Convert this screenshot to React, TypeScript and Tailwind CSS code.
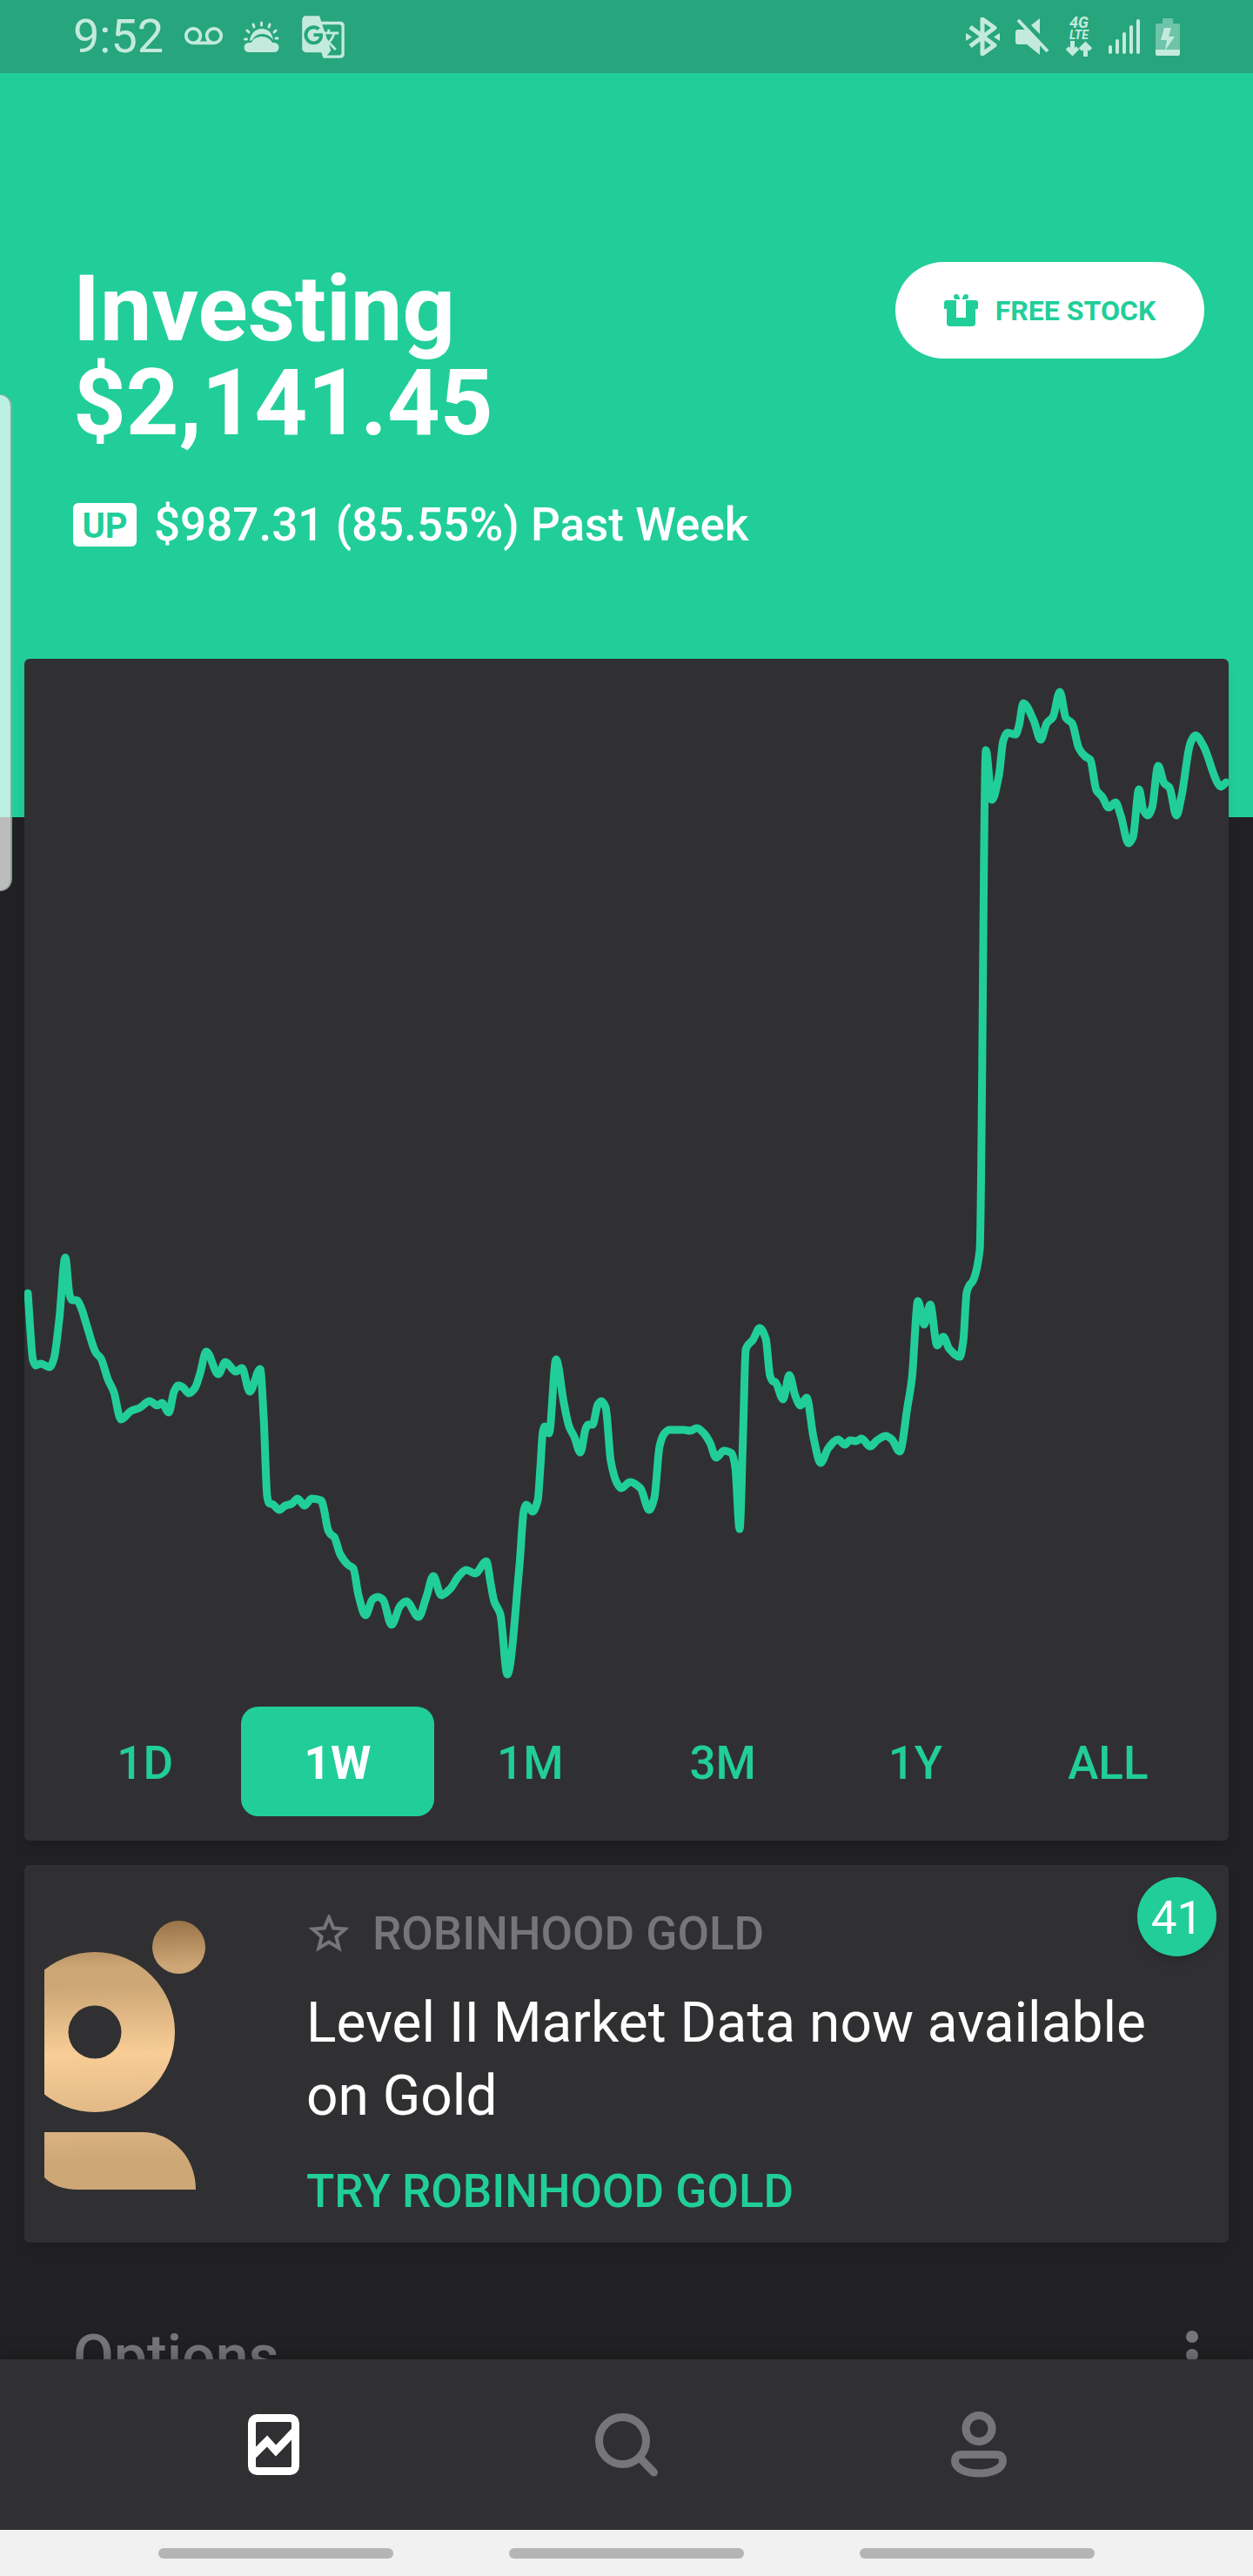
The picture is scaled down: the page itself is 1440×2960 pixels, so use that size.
import React, { useState } from 'react';
import { MdGTranslate, MdVoicemail } from 'react-icons/md';

type Point = [number, number];

const RANGES = ['1D', '1W', '1M', '3M', '1Y', 'ALL'];

const CHART_POINTS: Point[] = [
  [32, 1487], [38, 1564], [41, 1570], [47, 1568], [57, 1572], [62, 1562], [68, 1518], [75, 1446],
  [80, 1489], [83, 1495], [88, 1495], [93, 1503], [100, 1525], [110, 1555], [116, 1562], [124, 1586],
  [131, 1601], [137, 1628], [139, 1632], [151, 1622], [160, 1619], [172, 1611], [181, 1616], [186, 1613],
  [194, 1624], [200, 1600], [205, 1593], [210, 1595], [217, 1602], [224, 1596], [230, 1579], [237, 1554],
  [251, 1580], [259, 1566], [271, 1577], [278, 1573], [287, 1600], [299, 1574], [303, 1629], [307, 1720],
  [309, 1728], [314, 1730], [321, 1736], [328, 1731], [335, 1729], [342, 1723], [350, 1731], [358, 1723],
  [369, 1725], [372, 1734], [377, 1759], [380, 1764], [384, 1767], [391, 1787], [400, 1799], [406, 1803],
  [412, 1834], [420, 1857], [428, 1839], [434, 1836], [440, 1839], [450, 1868], [460, 1846], [467, 1841],
  [481, 1859], [490, 1836], [498, 1812], [507, 1834], [517, 1827], [528, 1811], [536, 1805], [546, 1809],
  [559, 1795], [564, 1821], [568, 1841], [575, 1856], [583, 1925], [597, 1800], [602, 1737], [605, 1730],
  [612, 1738], [618, 1725], [621, 1687], [624, 1645], [626, 1640], [631, 1648], [639, 1563], [648, 1613],
  [654, 1640], [660, 1652], [667, 1670], [673, 1643], [676, 1638], [681, 1638], [687, 1615], [691, 1611],
  [696, 1618], [702, 1680], [709, 1705], [714, 1711], [724, 1704], [736, 1711], [746, 1736], [752, 1722],
  [758, 1663], [763, 1649], [769, 1644], [786, 1644], [793, 1645], [801, 1642], [809, 1648], [816, 1659],
  [823, 1676], [832, 1668], [841, 1671], [845, 1687], [850, 1758], [854, 1647], [857, 1552], [860, 1546],
  [865, 1541], [873, 1527], [880, 1539], [885, 1582], [888, 1588], [891, 1589], [900, 1609], [907, 1581],
  [914, 1605], [920, 1616], [927, 1607], [935, 1653], [943, 1682], [952, 1665], [963, 1655], [971, 1661],
  [977, 1656], [984, 1657], [990, 1654], [1000, 1663], [1008, 1656], [1018, 1651], [1025, 1655], [1034, 1669],
  [1043, 1617], [1048, 1585], [1055, 1496], [1062, 1523], [1069, 1500], [1077, 1547], [1084, 1537], [1091, 1551],
  [1103, 1560], [1107, 1542], [1111, 1486], [1114, 1478], [1118, 1473], [1126, 1437], [1133, 863], [1140, 920],
  [1148, 892], [1153, 852], [1158, 843], [1167, 845], [1171, 835], [1176, 809], [1188, 829], [1196, 851],
  [1203, 832], [1210, 825], [1218, 796], [1225, 826], [1232, 832], [1240, 861], [1247, 870], [1253, 874],
  [1260, 909], [1267, 917], [1274, 929], [1282, 923], [1288, 938], [1297, 970], [1302, 963], [1309, 908],
  [1314, 932], [1319, 938], [1324, 929], [1331, 881], [1338, 901], [1344, 906], [1352, 938], [1358, 915],
  [1368, 855], [1374, 846], [1383, 858], [1400, 902], [1403, 905], [1409, 900],
];

// monotone cubic, so the line never swings past a data point
const smoothPath = (pts: Point[]) => {
  const slopes = pts.slice(1).map((p, i) => (p[1] - pts[i][1]) / (p[0] - pts[i][0]));
  const tangents = pts.map((_, i) => {
    if (i === 0) return slopes[0];
    if (i === pts.length - 1) return slopes[i - 1];
    const a = slopes[i - 1];
    const b = slopes[i];
    return a * b <= 0 ? 0 : (2 * a * b) / (a + b);
  });

  let d = `M${pts[0][0]} ${pts[0][1]}`;
  for (let i = 1; i < pts.length; i++) {
    const [x0, y0] = pts[i - 1];
    const [x1, y1] = pts[i];
    const h = (x1 - x0) / 3;
    d += ` C${x0 + h} ${y0 + tangents[i - 1] * h} ${x1 - h} ${y1 - tangents[i] * h} ${x1} ${y1}`;
  }
  return d;
};

const StatusBar: React.FC = () => (
  <div className="flex h-[84px] shrink-0 items-center justify-between bg-[#27a57c] px-[84px] text-[#c3eadd]">
    <div className="flex items-center gap-6">
      <span className="text-[54px] leading-[60px]">9:52</span>
      <MdVoicemail size={44} />
      <svg width="41" height="36" viewBox="0 0 41 36" fill="currentColor">
        <path d="M6 36a5.500 5.500 0 0 1 0-11h3C11 20 16 18 21 18s10 3 12 7h2a5.500 5.500 0 0 1 0 11z" />
        <path d="M7 23C8 14 14 9 21 9s12 5 13 13C30 16 25 15 21 15c-5 0-9 3-11 7z" />
        <g stroke="currentColor" strokeWidth="3" strokeLinecap="round">
          <path d="M20.500 2v3M11 4l1 3M30 4l-1 3M4 11l2 2M37 11l-2 2M1.500 21h2M37 20h2" />
        </g>
      </svg>
      <MdGTranslate size={53} />
    </div>
    <div className="flex items-center gap-[18px]">
      <svg width="39" height="44" viewBox="0 0 39 44" fill="currentColor">
        <path
          d="M5 11l28 21-14 10V2l14 10L5 33"
          fill="none"
          stroke="currentColor"
          strokeWidth="5"
          strokeLinejoin="round"
        />
        <path d="M0 18l7 4.500L0 27zM39 18l-7 4.500 7 4.500z" />
      </svg>
      <svg width="39" height="42" viewBox="0 0 39 42" fill="currentColor">
        <path d="M3 13h10l15 16v13L13 30H3q-3 0-3-3V16q0-3 3-3zM28 0v18L18 8z" />
        <path d="M3 2l34 36" stroke="currentColor" strokeWidth="4" />
      </svg>
      <div className="flex w-8 flex-col items-center font-bold italic">
        <span className="text-[18px] leading-[14px]">4G</span>
        <span className="text-[14px] leading-[14px]">LTE</span>
        <svg width="30" height="18" viewBox="0 0 30 18" fill="none" stroke="currentColor" strokeWidth="5">
          <path d="M7.500 0v14M1.500 8l6 6 6-6M22.500 18V4M16.500 10l6-6 6 6" />
        </svg>
      </div>
      <svg width="36" height="40" viewBox="0 0 36 40" fill="currentColor">
        <rect x="0" y="30" width="4" height="10" rx="2" />
        <rect x="8" y="23" width="4" height="17" rx="2" />
        <rect x="16" y="15" width="4" height="25" rx="2" />
        <rect x="24" y="7" width="4" height="33" rx="2" />
        <rect x="32" y="0" width="4" height="40" rx="2" />
      </svg>
      <svg width="28" height="43" viewBox="0 0 28 43" fill="currentColor">
        <path d="M8 1q0-1 1-1h10q1 0 1 1v5h6q2 0 2 2v28H0V8q0-2 2-2h6z" opacity="0.45" />
        <path d="M0 36h28v5q0 2-2 2H2q-2 0-2-2zM10 11h8l-3 10h7L11 37l2-12H6z" />
      </svg>
    </div>
  </div>
);

const GiftIcon: React.FC = () => (
  <svg width="39" height="37" viewBox="0 0 39 37" fill="currentColor">
    <path d="M3 7h11v20h11V7h11q3 0 3 3v7h-3v16q0 4-4 4H7q-4 0-4-4V17H0v-7q0-3 3-3z" />
    <path d="M18.500 6H14q-3 0-3-3t3-3q2 0 3 2zM20.500 6H25q3 0 3-3t-3-3q-2 0-3 2z" />
  </svg>
);

const Header: React.FC = () => (
  <header className="flex items-start justify-between bg-[#21ce99] pt-[217px] pr-14 pb-[306px] pl-[84px] text-white">
    <div>
      <h1 className="text-[106px] leading-[108px] font-bold">
        Investing
        <br />
        $2,141.45
      </h1>
      <div className="mt-14 flex items-center gap-5">
        <span className="flex h-[50px] w-[73px] items-center justify-center rounded-md bg-white pt-1 text-[40px] font-bold text-[#21ce99]">
          UP
        </span>
        <span className="text-[53px] leading-[60px] font-medium">$987.31 (85.55%) Past Week</span>
      </div>
    </div>
    <button
      type="button"
      className="flex h-[111px] w-[355px] items-center justify-center gap-5 rounded-full bg-white text-[32px] font-bold text-[#21ce99]"
    >
      <GiftIcon />
      FREE STOCK
    </button>
  </header>
);

const ChartCard: React.FC = () => {
  const [range, setRange] = useState('1W');

  return (
    <section className="relative -mt-[182px] overflow-hidden rounded-md bg-[#303032] pb-7 shadow-lg">
      <svg className="block h-auto w-full" viewBox="28 758 1384 1204" fill="none">
        <path
          d={smoothPath(CHART_POINTS)}
          stroke="#21ce99"
          strokeWidth="9"
          strokeLinecap="round"
          strokeLinejoin="round"
        />
      </svg>
      <div className="grid grid-cols-6 px-7">
        {RANGES.map((item) => (
          <button
            key={item}
            type="button"
            onClick={() => setRange(item)}
            className={`h-[126px] rounded-[20px] pt-1.5 text-[53px] ${
              item === range ? 'bg-[#21ce99] font-bold text-white' : 'font-medium text-[#21ce99]'
            }`}
          >
            {item}
          </button>
        ))}
      </div>
    </section>
  );
};

const GoldLogo: React.FC = () => (
  <svg width="185" height="309" viewBox="0 0 185 309" className="shrink-0">
    <defs>
      <linearGradient id="gold" gradientUnits="userSpaceOnUse" x1="0" y1="0" x2="8" y2="309">
        <stop offset="0" stopColor="#966f46" />
        <stop offset="0.18" stopColor="#cda776" />
        <stop offset="0.25" stopColor="#cda776" />
        <stop offset="0.5" stopColor="#f8cd96" />
        <stop offset="0.8" stopColor="#d9b181" />
        <stop offset="0.9" stopColor="#cda776" />
        <stop offset="1" stopColor="#cda776" />
      </linearGradient>
    </defs>
    <g fill="url(#gold)">
      <circle cx="154.500" cy="30.500" r="30.500" />
      <path
        fillRule="evenodd"
        d="M58 36a92 92 0 1 1 0 184a92 92 0 1 1 0-184zM58 97.500a30.500 30.500 0 1 0 0 61a30.500 30.500 0 1 0 0-61z"
      />
      <path d="M0 243h112c35 0 62 29 62 66H38C22 309 9 304 0 295z" />
    </g>
  </svg>
);

const GoldCard: React.FC = () => (
  <section className="relative mt-7 flex rounded-md bg-[#303032] pt-[49px] pb-[29px] pl-[23px] shadow-lg">
    <div className="w-[301px] shrink-0 pt-[15px]">
      <GoldLogo />
    </div>
    <div className="flex-1">
      <h2 className="flex items-center gap-7 text-[53px] leading-[60px] font-medium text-[#767679]">
        <svg width="48" height="44" viewBox="0 0 48 44" fill="none" stroke="currentColor" strokeWidth="4">
          <path d="M26 3l5.200 12.500 13.500 1.100-10.300 8.800 3.200 13.200L26 31.500l-11.600 7.100 3.200-13.200L7.300 16.600l13.500-1.100z" />
        </svg>
        ROBINHOOD GOLD
      </h2>
      <p className="mt-[31px] pr-16 text-[64px] leading-[84px] text-white">
        Level II Market Data now available on Gold
      </p>
      <a href="#gold" className="mt-[37px] block text-[53px] leading-[60px] font-medium text-[#21ce99]">
        TRY ROBINHOOD GOLD
      </a>
    </div>
    <span className="absolute top-[14px] right-[14px] flex size-[91px] items-center justify-center rounded-full bg-[#21ce99] pt-1 text-[53px] text-white shadow-lg">
      41
    </span>
  </section>
);

const OptionsRow: React.FC = () => (
  <div className="mt-[89px] flex items-start justify-between pr-[35px] pl-14 text-[#767679]">
    <h2 className="text-[68px] leading-[84px] font-medium">Options</h2>
    <button type="button" aria-label="More" className="mt-3">
      <svg width="14" height="56" viewBox="0 0 14 56" fill="currentColor">
        <circle cx="7" cy="7" r="7" />
        <circle cx="7" cy="28" r="7" />
        <circle cx="7" cy="49" r="7" />
      </svg>
    </button>
  </div>
);

const BottomNav: React.FC = () => (
  <nav className="relative grid h-[196px] shrink-0 grid-cols-3 bg-[#303032] px-28 text-[#767679] shadow-[0_-4px_16px_rgba(0,0,0,0.25)]">
    <button type="button" aria-label="Portfolio" className="flex items-center justify-center text-white">
      <svg width="59" height="70" viewBox="0 0 59 70" fill="none" stroke="currentColor" strokeWidth="9">
        <rect x="4.500" y="4.500" width="50" height="61" rx="6" />
        <path d="M5 48l17-17 10 11 23-24" />
      </svg>
    </button>
    <button type="button" aria-label="Search" className="flex items-center justify-center">
      <svg width="72" height="73" viewBox="0 0 72 73" fill="none" stroke="currentColor" strokeWidth="9">
        <circle cx="31.500" cy="31.500" r="27" />
        <path d="M53 53l14.500 15" strokeLinecap="round" />
      </svg>
    </button>
    <button type="button" aria-label="Account" className="flex items-center justify-center">
      <svg width="64" height="76" viewBox="0 0 64 76" fill="none" stroke="currentColor" strokeWidth="9">
        <circle cx="32" cy="19.500" r="15" />
        <path d="M12 49.500h40q7.500 0 7.500 7.500C59.500 66 46 71 32 71S4.500 66 4.500 57q0-7.500 7.500-7.500z" />
      </svg>
    </button>
  </nav>
);

const App: React.FC = () => (
  <div className="relative flex h-screen flex-col overflow-hidden bg-[#212123] font-[Roboto,sans-serif]">
    <StatusBar />
    <main className="min-h-0 flex-1 overflow-hidden">
      <Header />
      <div className="px-7">
        <ChartCard />
        <GoldCard />
        <OptionsRow />
      </div>
    </main>
    <BottomNav />
    <div className="relative flex h-[53px] shrink-0 items-center justify-center gap-[133px] bg-[#f1f1f1]">
      <span className="h-3 w-[270px] rounded-full bg-[#b5b5b5]" />
      <span className="h-3 w-[270px] rounded-full bg-[#b5b5b5]" />
      <span className="h-3 w-[270px] rounded-full bg-[#b5b5b5]" />
    </div>
    {/* edge panel handle */}
    <div className="absolute top-[453px] left-0 h-[571px] w-[14px] rounded-r-[14px] border-y border-r-2 border-[#6f8f84]/70 bg-white/70" />
  </div>
);

export default App;
